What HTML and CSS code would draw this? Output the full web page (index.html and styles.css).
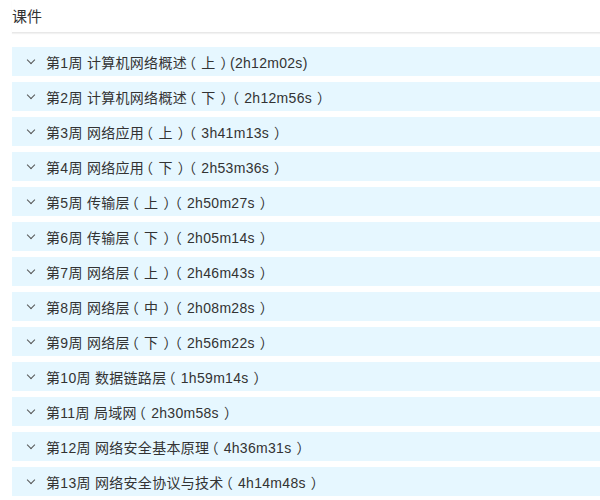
FILE: index.html
```html
<!DOCTYPE html>
<html>
<head>
  <meta charset="utf-8">
  <link rel="stylesheet" href="styles.css">
</head>
<body>
  <div class="header">课件</div>

  <div class="chapters">
    <div class="chapter"><span class="arrow"></span><span class="title">第1周 计算机网络概述<span class="lp">（</span>上<span class="rp">）</span>(2h12m02s)</span></div>
    <div class="chapter"><span class="arrow"></span><span class="title">第2周 计算机网络概述<span class="lp">（</span>下<span class="rp">）</span><span class="lp">（</span>2h12m56s<span class="rp">）</span></span></div>
    <div class="chapter"><span class="arrow"></span><span class="title">第3周 网络应用<span class="lp">（</span>上<span class="rp">）</span><span class="lp">（</span>3h41m13s<span class="rp">）</span></span></div>
    <div class="chapter"><span class="arrow"></span><span class="title">第4周 网络应用<span class="lp">（</span>下<span class="rp">）</span><span class="lp">（</span>2h53m36s<span class="rp">）</span></span></div>
    <div class="chapter"><span class="arrow"></span><span class="title">第5周 传输层<span class="lp">（</span>上<span class="rp">）</span><span class="lp">（</span>2h50m27s<span class="rp">）</span></span></div>
    <div class="chapter"><span class="arrow"></span><span class="title">第6周 传输层<span class="lp">（</span>下<span class="rp">）</span><span class="lp">（</span>2h05m14s<span class="rp">）</span></span></div>
    <div class="chapter"><span class="arrow"></span><span class="title">第7周 网络层<span class="lp">（</span>上<span class="rp">）</span><span class="lp">（</span>2h46m43s<span class="rp">）</span></span></div>
    <div class="chapter"><span class="arrow"></span><span class="title">第8周 网络层<span class="lp">（</span>中<span class="rp">）</span><span class="lp">（</span>2h08m28s<span class="rp">）</span></span></div>
    <div class="chapter"><span class="arrow"></span><span class="title">第9周 网络层<span class="lp">（</span>下<span class="rp">）</span><span class="lp">（</span>2h56m22s<span class="rp">）</span></span></div>
    <div class="chapter"><span class="arrow"></span><span class="title">第10周 数据链路层<span class="lp">（</span>1h59m14s<span class="rp">）</span></span></div>
    <div class="chapter"><span class="arrow"></span><span class="title">第11周 局域网<span class="lp">（</span>2h30m58s<span class="rp">）</span></span></div>
    <div class="chapter"><span class="arrow"></span><span class="title">第12周 网络安全基本原理<span class="lp">（</span>4h36m31s<span class="rp">）</span></span></div>
    <div class="chapter"><span class="arrow"></span><span class="title">第13周 网络安全协议与技术<span class="lp">（</span>4h14m48s<span class="rp">）</span></span></div>
  </div>
</body>
</html>
```

FILE: styles.css
```css
body {
  margin: 0;
  padding: 0 0 0 12px;
  font-family: "Liberation Sans", "Noto Sans CJK SC", sans-serif;
  color: #333;
  background-color: white;
}

.header {
  height: 32px;
  line-height: 34px;
  font-size: 15px;
  color: #333;
  border-bottom: 1px solid #e8e8e8;
  box-shadow: 0 1px 1px #f2f2f2;
}

.chapters {
  margin-top: 14px;
}

.chapter {
  display: flex;
  align-items: center;
  height: 29px;
  margin-bottom: 6px;
  padding-left: 15px;
  background-color: #e6f7ff;
  font-size: 14px;
}

.arrow {
  width: 5px;
  height: 5px;
  margin: 0 12px 3px 1px;
  border-right: 1.5px solid #555;
  border-bottom: 1.5px solid #555;
  transform: rotate(45deg);
}

.title {
  color: #333;
  white-space: nowrap;
  letter-spacing: 0.3px;
  text-spacing-trim: space-all;
}

/* full-width brackets sit outward, like the original font */
.lp {
  margin-left: -5px;
  margin-right: 5px;
}

.rp {
  margin-left: 5px;
  margin-right: -5px;
}
```
